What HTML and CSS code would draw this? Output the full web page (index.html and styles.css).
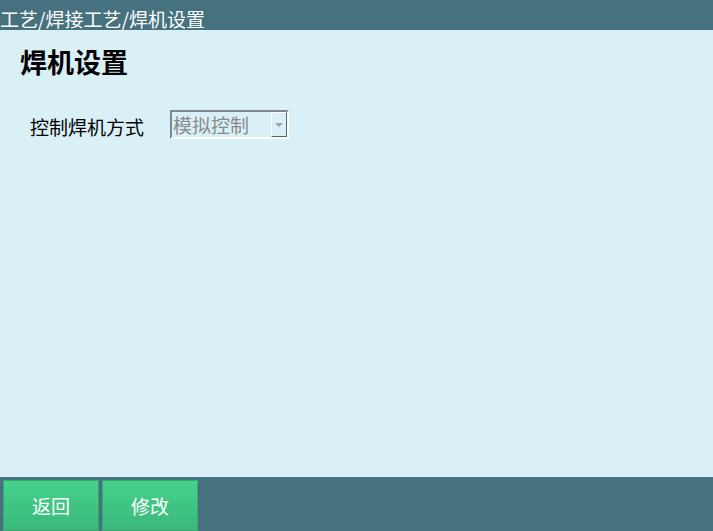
FILE: index.html
```html
<!DOCTYPE html>
<html lang="zh-CN">
<head>
    <meta charset="UTF-8">
    <meta name="viewport" content="width=device-width, initial-scale=1.0">
    <title>焊机设置</title>
    <link rel="stylesheet" href="styles.css">
</head>
<body>
    <div class="crumb">工艺/焊接工艺/焊机设置</div>

    <div class="content">
        <h1 class="title">焊机设置</h1>
        <div class="row">
            <span class="label">控制焊机方式</span>
            <div class="select">
                <span class="select-text">模拟控制</span>
                <span class="select-btn"><span class="arrow"></span></span>
            </div>
        </div>
    </div>

    <div class="footer">
        <button class="btn">返回</button>
        <button class="btn">修改</button>
    </div>
</body>
</html>
```

FILE: styles.css
```css
html, body {
    height: 100%;
}

body {
    margin: 0;
    font-family: "Noto Sans CJK SC", "Noto Sans", sans-serif;
    background-color: #d9f0f7;
    color: #000;
    display: flex;
    flex-direction: column;
    overflow: hidden;
}

.crumb {
    height: 30px;
    flex-shrink: 0;
    background-color: #46717f;
    color: #fff;
    font-size: 19px;
    line-height: 22px;
    padding-top: 8px;
    box-sizing: border-box;
    white-space: nowrap;
}

.content {
    flex: 1;
    padding: 0 20px;
}

.title {
    margin: 12px 0 0 0;
    height: 40px;
    font-size: 27px;
    line-height: 40px;
    font-weight: bold;
}

.row {
    display: flex;
    align-items: center;
    height: 29px;
    margin-top: 28px;
    padding-left: 10px;
}

.label {
    font-size: 19px;
    line-height: 29px;
    padding-top: 4px;
    width: 140px;
}

.select {
    width: 119px;
    height: 29px;
    flex-shrink: 0;
    box-sizing: border-box;
    border: 2px solid;
    border-color: #7a8a8f #ffffff #ffffff #7a8a8f;
    display: flex;
    align-items: stretch;
}

.select-text {
    flex: 1;
    font-size: 19px;
    line-height: 25px;
    color: #8a8a8a;
    padding-left: 1px;
    white-space: nowrap;
    overflow: hidden;
}

.select-btn {
    width: 16px;
    box-sizing: border-box;
    border: 1px solid;
    border-color: #ffffff #56666b #56666b #ffffff;
    display: flex;
    align-items: center;
    justify-content: center;
}

.arrow {
    width: 0;
    height: 0;
    border-left: 4px solid transparent;
    border-right: 4px solid transparent;
    border-top: 4px solid #9aa4a7;
}

.footer {
    height: 54px;
    flex-shrink: 0;
    background-color: #46717f;
    display: flex;
    gap: 3px;
    padding: 3px 0 0 3px;
    box-sizing: border-box;
}

.btn {
    width: 96px;
    height: 51px;
    border: none;
    border-radius: 1px;
    background: linear-gradient(#45d38b, #3ab77b);
    box-shadow: inset 0 0 0 1px #3aa772;
    color: #fff;
    font-family: inherit;
    font-size: 19px;
    padding: 0;
    margin: 0;
}
```
